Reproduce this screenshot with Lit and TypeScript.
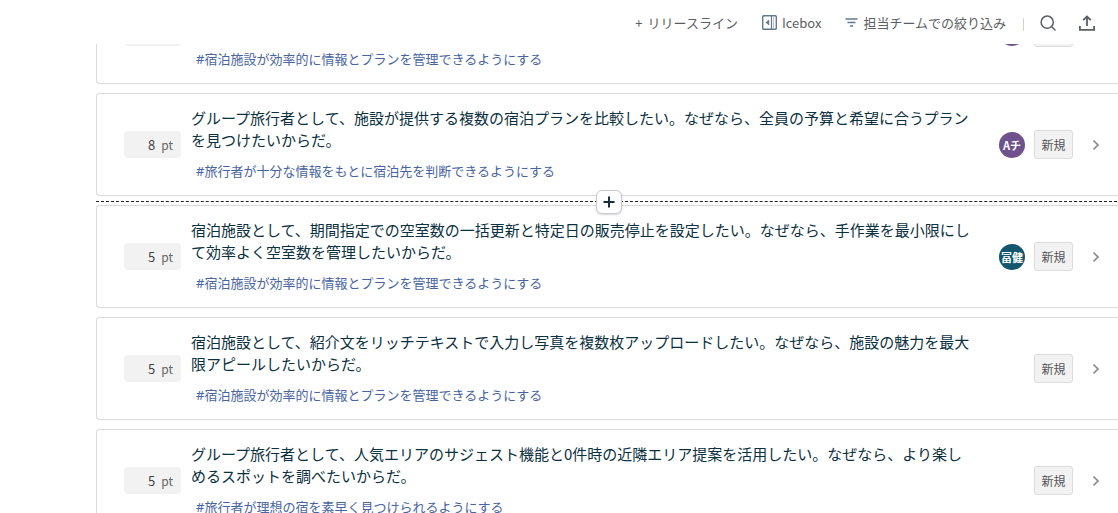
import { LitElement, html, css, svg, nothing } from "lit";
import { customElement, property, query } from "lit/decorators.js";
import { classMap } from "lit/directives/class-map.js";

interface Assignee {
  initials?: string;
  tone: "purple" | "teal";
}

interface Story {
  title?: string;
  points?: number;
  status?: string;
  tag: string;
  assignee?: Assignee;
}

const FACILITY_TAG = "#宿泊施設が効率的に情報とプランを管理できるようにする";

const STORIES: Story[] = [
  { tag: FACILITY_TAG, assignee: { tone: "purple" } },
  {
    title:
      "グループ旅行者として、施設が提供する複数の宿泊プランを比較したい。なぜなら、全員の予算と希望に合うプランを見つけたいからだ。",
    points: 8,
    status: "新規",
    tag: "#旅行者が十分な情報をもとに宿泊先を判断できるようにする",
    assignee: { initials: "Aチ", tone: "purple" },
  },
  {
    title:
      "宿泊施設として、期間指定での空室数の一括更新と特定日の販売停止を設定したい。なぜなら、手作業を最小限にして効率よく空室数を管理したいからだ。",
    points: 5,
    status: "新規",
    tag: FACILITY_TAG,
    assignee: { initials: "冨健", tone: "teal" },
  },
  {
    title:
      "宿泊施設として、紹介文をリッチテキストで入力し写真を複数枚アップロードしたい。なぜなら、施設の魅力を最大限アピールしたいからだ。",
    points: 5,
    status: "新規",
    tag: FACILITY_TAG,
  },
  {
    title:
      "グループ旅行者として、人気エリアのサジェスト機能と0件時の近隣エリア提案を活用したい。なぜなら、より楽しめるスポットを調べたいからだ。",
    points: 5,
    status: "新規",
    tag: "#旅行者が理想の宿を素早く見つけられるようにする",
  },
];

const INSERT_AFTER = 1;

const panelIcon = svg`<svg width="15" height="15" viewBox="0 0 15 15" fill="none" stroke="#64788a" stroke-width="1.4" aria-hidden="true">
  <rect x="0.7" y="0.7" width="13.6" height="13.6" rx="1"/>
  <path d="M9.5 1v13" stroke-width="1.2"/>
  <path d="M11.6 1v13" stroke="#b9bdd0" stroke-width="1"/>
  <path d="M7.2 4.4v6.2L3.6 7.5z" fill="#64788a" stroke="none"/>
</svg>`;

const filterIcon = svg`<svg width="13" height="9" viewBox="0 0 13 9" fill="none" stroke="#64788a" stroke-width="1.3" aria-hidden="true">
  <path d="M0.5 1h12M2.5 4.5h8M5 8h3"/>
</svg>`;

const searchIcon = svg`<svg width="16" height="16" viewBox="0 0 16 16" fill="none" stroke="#5b5f63" stroke-width="1.5" stroke-linecap="round" aria-hidden="true">
  <circle cx="7.2" cy="7.2" r="6.1"/><path d="M11.8 11.8l3.2 3.2"/>
</svg>`;

const uploadIcon = svg`<svg width="18" height="16" viewBox="0 0 18 16" fill="none" stroke="#5b5f63" stroke-width="1.8" aria-hidden="true">
  <path d="M9 11V1.6M5.2 5.2L9 1.5l3.8 3.7M1.9 11v3.9h14.2v-3.9"/>
</svg>`;

const chevronIcon = svg`<svg width="8" height="12" viewBox="0 0 8 12" fill="none" stroke="#85858c" stroke-width="1.6" aria-hidden="true">
  <path d="M1.5 1.5L6 6l-4.5 4.5"/>
</svg>`;

const plusIcon = svg`<svg width="12" height="12" viewBox="0 0 12 12" fill="none" stroke="#1c2b45" stroke-width="2" aria-hidden="true">
  <path d="M6 0.5v11M0.5 6h11"/>
</svg>`;

@customElement("story-card")
class StoryCard extends LitElement {
  @property({ attribute: false }) story!: Story;

  static styles = css`
    :host {
      display: block;
    }
    .card {
      display: flex;
      align-items: center;
      box-sizing: border-box;
      padding: 13px 18px 13px 27px;
      border: 1px solid #d9dadb;
      border-right: none;
      border-radius: 4px 0 0 4px;
      background: #fff;
    }
    .points {
      display: flex;
      align-items: center;
      gap: 6px;
      flex: none;
      box-sizing: border-box;
      width: 57px;
      height: 27px;
      margin-right: 10px;
      padding-right: 8px;
      border-radius: 4px;
      background: #f2f2f2;
      color: #666;
      font-size: 12px;
    }
    .points-input {
      flex: 1;
      min-width: 0;
      box-sizing: border-box;
      padding: 0;
      border: none;
      background: none;
      color: #444;
      font: inherit;
      font-size: 13px;
      text-align: right;
    }
    .body {
      flex: 1;
      min-width: 0;
      display: flex;
      flex-direction: column;
      align-items: flex-start;
      gap: 9px;
    }
    .title {
      min-height: 44px;
      padding-right: 18px;
      color: #0b3040;
      font-size: 15px;
      line-height: 22px;
    }
    .tag {
      padding-left: 5px;
      color: #4864a0;
      font-family: "Noto Sans", "Noto Sans CJK JP", sans-serif;
      font-size: 13px;
      line-height: 22px;
      text-decoration: none;
    }
    .side {
      display: flex;
      align-items: center;
      justify-content: flex-end;
      gap: 9px;
      flex: none;
      width: 110px;
    }
    .avatar {
      display: flex;
      align-items: center;
      justify-content: center;
      width: 26px;
      height: 26px;
      border-radius: 50%;
      color: #fff;
      font-size: 11px;
      font-weight: 700;
      line-height: 16px;
      white-space: nowrap;
    }
    .purple {
      background: #6f518c;
    }
    .teal {
      background: #14566d;
    }
    .status {
      box-sizing: border-box;
      width: 39px;
      height: 29px;
      padding: 0;
      border: 1px solid #dcdcdc;
      border-radius: 3px;
      background: #f2f2f2;
      color: #555;
      font: inherit;
      font-size: 12px;
      line-height: 18px;
      cursor: pointer;
    }
    .open {
      display: flex;
      margin-left: 6px;
      padding: 4px;
      border: none;
      background: none;
      cursor: pointer;
    }
  `;

  render() {
    const { title, points, status, tag, assignee } = this.story;
    return html`
      <article class="card">
        <label class="points">
          <input class="points-input" type="text" inputmode="numeric" .value=${String(points ?? "")} />
          ${points === undefined ? nothing : html`<span>pt</span>`}
        </label>
        <div class="body">
          <div class="title">${title}</div>
          <a class="tag" href="#">${tag}</a>
        </div>
        <div class="side">
          ${assignee
            ? html`<span class=${classMap({ avatar: true, [assignee.tone]: true })}>${assignee.initials}</span>`
            : nothing}
          <button class="status" type="button">${status}</button>
          <button class="open" type="button">${chevronIcon}</button>
        </div>
      </article>
    `;
  }
}

@customElement("app-root")
class AppRoot extends LitElement {
  @query(".scroller") private scroller!: HTMLElement;

  static styles = css`
    :host {
      display: flex;
      flex-direction: column;
      height: 100vh;
      overflow: hidden;
      background: #fff;
      font-family: "Noto Sans CJK JP", "Noto Sans", sans-serif;
    }
    .toolbar {
      display: flex;
      align-items: center;
      justify-content: flex-end;
      flex: none;
      height: 44px;
      padding: 1px 22px 0 96px;
      box-sizing: border-box;
      color: #5b5f63;
      font-size: 13px;
      line-height: 20px;
    }
    .tool {
      display: flex;
      align-items: center;
      gap: 5px;
      margin-right: 24px;
      padding: 0;
      border: none;
      background: none;
      color: inherit;
      font: inherit;
      white-space: nowrap;
      cursor: pointer;
    }
    .tool.search {
      margin-right: 22px;
    }
    .tool.upload {
      margin-right: 0;
    }
    .tool.filter {
      margin-right: 15px;
    }
    .divider {
      width: 1px;
      height: 13px;
      margin: 4px 16px 0 2px;
      background: #d5cfc4;
    }
    .scroller {
      flex: 1;
      min-height: 0;
      overflow-y: auto;
      scrollbar-width: none;
      margin-right: -4px;
      padding-left: 96px;
    }
    .gap {
      position: relative;
      height: 9px;
    }
    .line {
      position: absolute;
      top: 5px;
      left: 0;
      right: 0;
      z-index: 1;
      display: flex;
      align-items: center;
      justify-content: center;
      height: 0;
      border-top: 1px dashed #222;
    }
    .insert {
      display: flex;
      align-items: center;
      justify-content: center;
      flex: none;
      box-sizing: border-box;
      width: 26px;
      height: 24px;
      padding: 0;
      border: 1px solid #c9c9d0;
      border-radius: 6px;
      background: #fff;
      box-shadow: 0 1px 2px rgb(0 0 0 / 15%);
      cursor: pointer;
    }
  `;

  async firstUpdated() {
    const cards = [...this.renderRoot.querySelectorAll("story-card")] as StoryCard[];
    await Promise.all(cards.map((card) => card.updateComplete));
    this.scroller.scrollTop = 63;
  }

  render() {
    return html`
      <header class="toolbar">
        <button class="tool" type="button"><span>+</span><span>リリースライン</span></button>
        <button class="tool" type="button">${panelIcon}<span>Icebox</span></button>
        <button class="tool filter" type="button">${filterIcon}<span>担当チームでの絞り込み</span></button>
        <span class="divider"></span>
        <button class="tool search" type="button" aria-label="検索">${searchIcon}</button>
        <button class="tool upload" type="button" aria-label="エクスポート">${uploadIcon}</button>
      </header>
      <main class="scroller">
        ${STORIES.map(
          (story, index) => html`
            <story-card .story=${story}></story-card>
            <div class="gap">
              ${index === INSERT_AFTER
                ? html`<div class="line"><button class="insert" type="button">${plusIcon}</button></div>`
                : nothing}
            </div>
          `,
        )}
      </main>
    `;
  }
}
